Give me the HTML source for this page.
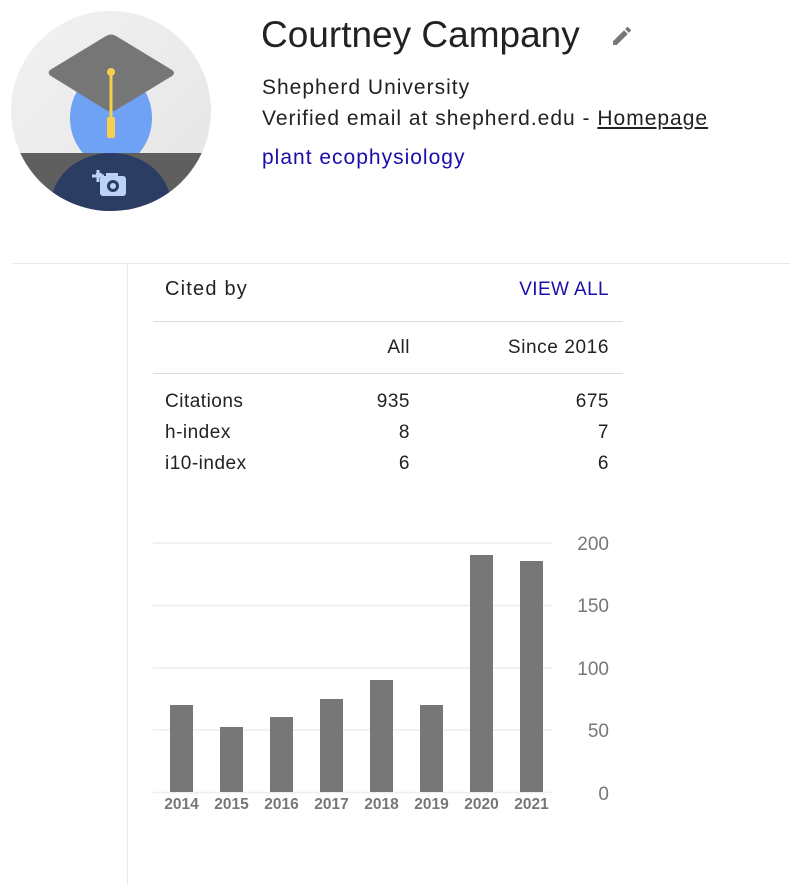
<!DOCTYPE html>
<html><head><style>
body{margin:0;width:790px;height:884px;background:#fff;font-family:"Liberation Sans",Arial,sans-serif;position:relative;overflow:hidden;color:#222}
.a{position:absolute;white-space:nowrap}
.t{font-size:19px;color:#222;letter-spacing:0.5px}
</style></head><body>
<svg class="a" style="left:0;top:0" width="230" height="230">
<defs><clipPath id="c"><circle cx="111" cy="111" r="100"/></clipPath>
<linearGradient id="g" x1="0" y1="0" x2="1" y2="1"><stop offset="0" stop-color="#f2f2f2"/><stop offset="1" stop-color="#e4e4e4"/></linearGradient></defs>
<g clip-path="url(#c)">
<rect x="0" y="0" width="230" height="230" fill="url(#g)"/>
<ellipse cx="111" cy="118" rx="41" ry="48" fill="#6fa1f5"/>
<rect x="0" y="153" width="230" height="80" fill="#5f5f5f"/>
<ellipse cx="111" cy="205" rx="60" ry="52" fill="#2b3d63"/>
</g>
<path d="M50 70 Q47 73 51 76 L106 110 Q111 113 116 110 L172 76 Q176 73 172 70 L116 36 Q111 33 106 36 Z" fill="#767676"/>
<line x1="111" y1="72" x2="111" y2="120" stroke="#f5d04c" stroke-width="3"/>
<circle cx="111" cy="72" r="4" fill="#f5d04c"/>
<rect x="107" y="117" width="8" height="21" rx="2" fill="#f5d04c"/>
<rect x="100" y="176" width="26" height="20" rx="3" fill="#bcd3f6"/>
<rect x="106" y="173" width="12" height="5" fill="#bcd3f6"/>
<circle cx="113" cy="186" r="6" fill="#2b3d63"/><circle cx="113" cy="186" r="3" fill="#bcd3f6"/>
<path d="M98 170v12M92 176h12" stroke="#bcd3f6" stroke-width="3"/>
<rect x="96" y="173" width="6" height="3" fill="#bcd3f6"/>
</svg>
<div class="a" style="left:261px;top:14px;font-size:37px;color:#222">Courtney Campany</div>
<svg class="a" style="left:610px;top:24px" width="24" height="24" viewBox="0 0 24 24"><path d="M3 17.25V21h3.75L17.81 9.94l-3.75-3.75L3 17.25zM20.71 7.04a1 1 0 0 0 0-1.41l-2.34-2.34a1 1 0 0 0-1.41 0l-1.83 1.83 3.75 3.75 1.83-1.83z" fill="#777"/></svg>
<div class="a" style="left:262px;top:76px;font-size:21px;letter-spacing:1px">Shepherd University</div>
<div class="a" style="left:262px;top:107px;font-size:21px;letter-spacing:1px">Verified email at shepherd.edu - <span style="text-decoration:underline">Homepage</span></div>
<div class="a" style="left:262px;top:146px;font-size:21px;letter-spacing:1px;color:#1a0dab">plant ecophysiology</div>
<div class="a" style="left:12px;top:263px;width:778px;height:1px;background:#e8e8e8"></div>
<div class="a" style="left:127px;top:264px;width:1px;height:620px;background:#e8e8e8"></div>
<div class="a t" style="left:165px;top:278px;font-size:20px;letter-spacing:1.2px">Cited by</div>
<div class="a" style="right:181px;top:279px;font-size:19px;letter-spacing:0.4px;color:#1a0dab">VIEW ALL</div>
<div class="a" style="left:153px;top:321px;width:470px;height:1px;background:#ddd"></div>
<div class="a t" style="right:380px;top:337px">All</div>
<div class="a t" style="right:181px;top:337px;letter-spacing:0.6px">Since 2016</div>
<div class="a" style="left:153px;top:373px;width:470px;height:1px;background:#ddd"></div>
<div class="a t" style="left:165px;top:391px">Citations</div><div class="a t" style="right:380px;top:391px">935</div><div class="a t" style="right:181px;top:391px">675</div>
<div class="a t" style="left:165px;top:422px">h-index</div><div class="a t" style="right:380px;top:422px">8</div><div class="a t" style="right:181px;top:422px">7</div>
<div class="a t" style="left:165px;top:453px">i10-index</div><div class="a t" style="right:380px;top:453px">6</div><div class="a t" style="right:181px;top:453px">6</div>
<svg class="a" style="left:0;top:520px" width="790" height="310">
<g stroke="#eee" stroke-width="1.5">
<line x1="153" y1="23" x2="552" y2="23"/><line x1="153" y1="85.5" x2="552" y2="85.5"/><line x1="153" y1="148" x2="552" y2="148"/><line x1="153" y1="210" x2="552" y2="210"/><line x1="153" y1="272.5" x2="552" y2="272.5"/>
</g>
<g fill="#777">
<rect x="170" y="185" width="23" height="87"/><rect x="220" y="207" width="23" height="65"/><rect x="270" y="197" width="23" height="75"/><rect x="320" y="179" width="23" height="93"/><rect x="370" y="160" width="23" height="112"/><rect x="420" y="185" width="23" height="87"/><rect x="470" y="35" width="23" height="237"/><rect x="520" y="41" width="23" height="231"/>
</g>
<g font-family="Liberation Sans,Arial,sans-serif" font-size="15.5" font-weight="bold" fill="#777" text-anchor="middle">
<text x="181.5" y="289">2014</text><text x="231.5" y="289">2015</text><text x="281.5" y="289">2016</text><text x="331.5" y="289">2017</text><text x="381.5" y="289">2018</text><text x="431.5" y="289">2019</text><text x="481.5" y="289">2020</text><text x="531.5" y="289">2021</text>
</g>
<g font-family="Liberation Sans,Arial,sans-serif" font-size="19" fill="#777" text-anchor="end">
<text x="609" y="30">200</text><text x="609" y="92">150</text><text x="609" y="155">100</text><text x="609" y="217">50</text><text x="609" y="280">0</text>
</g>
</svg>
</body></html>
